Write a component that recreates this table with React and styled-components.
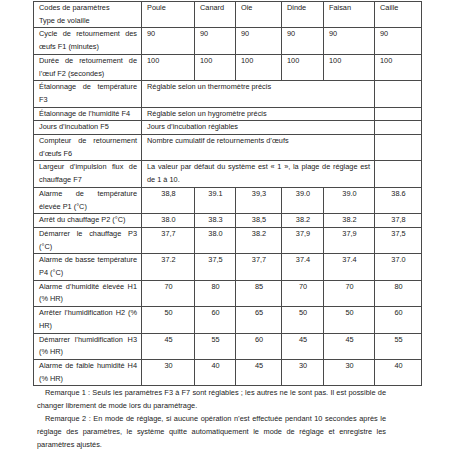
import React from 'react'
import styled, { createGlobalStyle } from 'styled-components'

const birds = ['Poule', 'Canard', 'Oie', 'Dinde', 'Faisan', 'Caille']

// Lignes à valeurs par espèce.
const valueRows = [
  { label: 'Cycle de retournement des œufs F1 (minutes)', values: ['90', '90', '90', '90', '90', '90'], align: 'left' },
  { label: 'Durée de retournement de l\u2019œuf F2 (secondes)', values: ['100', '100', '100', '100', '100', '100'], align: 'left' },
]

// Lignes fusionnées.
const spanRows = [
  { label: 'Étalonnage de température F3', text: 'Réglable selon un thermomètre précis' },
  { label: 'Étalonnage de l\u2019humidité F4', text: 'Réglable selon un hygromètre précis' },
  { label: 'Jours d\u2019incubation F5', text: 'Jours d\u2019incubation réglables' },
  { label: 'Compteur de retournement d\u2019œufs F6', text: 'Nombre cumulatif de retournements d\u2019œufs' },
  { label: 'Largeur d\u2019impulsion flux de chauffage F7', text: 'La valeur par défaut du système est « 1 », la plage de réglage est de 1 à 10.' },
]

// Seuils de température et d'humidité.
const thresholdRows = [
  { label: 'Alarme de température élevée P1 (°C)', values: ['38,8', '39.1', '39,3', '39.0', '39.0', '38.6'] },
  { label: 'Arrêt du chauffage P2 (°C)', values: ['38.0', '38.3', '38,5', '38.2', '38.2', '37,8'] },
  { label: 'Démarrer le chauffage P3 (°C)', values: ['37,7', '38.0', '38.2', '37,9', '37,9', '37,5'] },
  { label: 'Alarme de basse température P4 (°C)', values: ['37.2', '37,5', '37,7', '37.4', '37.4', '37.0'] },
  { label: 'Alarme d\u2019humidité élevée H1 (% HR)', values: ['70', '80', '85', '70', '70', '80'] },
  { label: 'Arrêter l\u2019humidification H2 (% HR)', values: ['50', '60', '65', '50', '50', '60'] },
  { label: 'Démarrer l\u2019humidification H3 (% HR)', values: ['45', '55', '60', '45', '45', '55'] },
  { label: 'Alarme de faible humidité H4 (% HR)', values: ['30', '40', '45', '30', '30', '40'] },
]

const colWidths = [108, 53, 41, 46, 42, 51, 47]

export default function App() {
  return (
    <Page>
      <GlobalStyle />
      <Table>
        <colgroup>
          {colWidths.map((w, i) => <col key={i} style={{ width: w }} />)}
        </colgroup>
        <tbody>
          <tr>
            <Cell $align="left">Codes de paramètres<br />Type de volaille</Cell>
            {birds.map(b => <Cell key={b} $align="left">{b}</Cell>)}
          </tr>

          {valueRows.map(row => (
            <tr key={row.label}>
              <Cell>{row.label}</Cell>
              {row.values.map((v, i) => <Cell key={i} $align={row.align}>{v}</Cell>)}
            </tr>
          ))}

          {spanRows.map(row => (
            <tr key={row.label}>
              <Cell>{row.label}</Cell>
              <Cell colSpan={5}>{row.text}</Cell>
              <Cell />
            </tr>
          ))}

          {thresholdRows.map(row => (
            <tr key={row.label}>
              <Cell>{row.label}</Cell>
              {row.values.map((v, i) => <Cell key={i} $align="center">{v}</Cell>)}
            </tr>
          ))}
        </tbody>
      </Table>

      <Note>
        Remarque 1 : Seuls les paramètres F3 à F7 sont réglables ; les autres ne le sont pas. Il est possible de changer librement de mode lors du paramétrage.
      </Note>
      <Note>
        Remarque 2 : En mode de réglage, si aucune opération n&#8217;est effectuée pendant 10 secondes après le réglage des paramètres, le système quitte automatiquement le mode de réglage et enregistre les paramètres ajustés.
      </Note>
    </Page>
  )
}

const GlobalStyle = createGlobalStyle`
  body {
    margin: 0;
    background: #ffffff;
    font-family: "Liberation Sans", Arial, sans-serif;
    color: #222;
  }
`

const Page = styled.div`
  padding: 1px 0 0 33px;
  width: 388px;
`

const Table = styled.table`
  width: 388px;
  table-layout: fixed;
  border-collapse: collapse;
  font-size: 7.35px;
  line-height: 12.7px;
`

// Cellule du tableau.
const Cell = styled.td`
  border: 1px solid #4a4a4a;
  padding: 0 4px 0 5px;
  vertical-align: top;
  text-align: ${({ $align }) => $align || 'justify'};
  overflow: hidden;
`

// Remarque sous le tableau.
const Note = styled.p`
  margin: 0 0 0 4px;
  width: 349px;
  font-size: 7.4px;
  line-height: 13px;
  text-indent: 8px;
  text-align: justify;
`
